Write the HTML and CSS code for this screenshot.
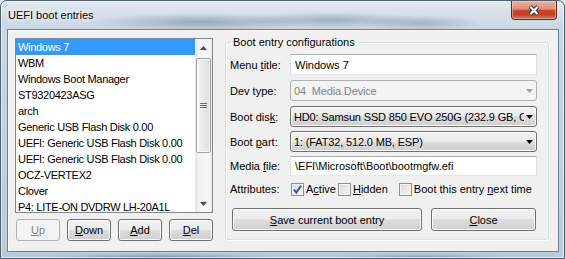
FILE: index.html
```html
<!DOCTYPE html>
<html lang="en">

<head>
     <meta charset="UTF-8">
     <meta name="viewport" content="width=device-width, initial-scale=1.0">
     <title>UEFI boot entries</title>
     <link rel="stylesheet" href="styles.css">
</head>

<body>
     <div class="window">
          <div class="titlebar">
               <span class="title">UEFI boot entries</span>
               <div class="closebtn">
                    <svg width="14" height="11" viewBox="0 0 14 11">
                         <path d="M3 1.5 L11 9.5 M11 1.5 L3 9.5" stroke="#30363c" stroke-width="4.2" fill="none"/>
                         <path d="M3.3 1.8 L10.7 9.2 M10.7 1.8 L3.3 9.2" stroke="#fff" stroke-width="2.2" fill="none"/>
                    </svg>
               </div>
          </div>
          <div class="client">
               <div class="leftside">
                    <div class="listbox">
                         <ul class="entries">
                              <li class="selected">Windows 7</li>
                              <li>WBM</li>
                              <li>Windows Boot Manager</li>
                              <li>ST9320423ASG</li>
                              <li>arch</li>
                              <li>Generic USB Flash Disk 0.00</li>
                              <li>UEFI: Generic USB Flash Disk 0.00</li>
                              <li>UEFI: Generic USB Flash Disk 0.00</li>
                              <li>OCZ-VERTEX2</li>
                              <li>Clover</li>
                              <li>P4: LITE-ON DVDRW LH-20A1L</li>
                         </ul>
                         <div class="scrollbar">
                              <div class="sb-arrow">
                                   <svg width="7" height="4" viewBox="0 0 7 4"><polygon points="0,4 7,4 3.5,0" fill="#4a4a4a"/></svg>
                              </div>
                              <div class="sb-track">
                                   <div class="sb-thumb"><span class="grip"></span></div>
                              </div>
                              <div class="sb-arrow">
                                   <svg width="7" height="4" viewBox="0 0 7 4"><polygon points="0,0 7,0 3.5,4" fill="#4a4a4a"/></svg>
                              </div>
                         </div>
                    </div>
                    <div class="listbuttons">
                         <button class="btn small" disabled><u>U</u>p</button>
                         <button class="btn small"><u>D</u>own</button>
                         <button class="btn small"><u>A</u>dd</button>
                         <button class="btn small"><u>D</u>el</button>
                    </div>
               </div>

               <fieldset class="config">
                    <legend>Boot entry configurations</legend>
                    <div class="row">
                         <label>Menu <u>t</u>itle:</label>
                         <input class="edit" type="text" value="Windows 7">
                    </div>
                    <div class="row gap5">
                         <label>Dev type:</label>
                         <div class="combo disabled">
                              <span class="combo-text">04&nbsp; Media Device</span>
                              <span class="combo-arrow"><svg width="7" height="4" viewBox="0 0 7 4"><polygon points="0,0 7,0 3.5,4" fill="#a3a3a3"/></svg></span>
                         </div>
                    </div>
                    <div class="row gap5">
                         <label>Boot dis<u>k</u>:</label>
                         <div class="combo">
                              <span class="combo-text">HD0: Samsun SSD 850 EVO 250G (232.9 GB, C</span>
                              <span class="combo-arrow"><svg width="7" height="4" viewBox="0 0 7 4"><polygon points="0,0 7,0 3.5,4" fill="#000"/></svg></span>
                         </div>
                    </div>
                    <div class="row gap4">
                         <label>Boot <u>p</u>art:</label>
                         <div class="combo">
                              <span class="combo-text">1: (FAT32, 512.0 MB, ESP)</span>
                              <span class="combo-arrow"><svg width="7" height="4" viewBox="0 0 7 4"><polygon points="0,0 7,0 3.5,4" fill="#000"/></svg></span>
                         </div>
                    </div>
                    <div class="row gap4 short">
                         <label>Media <u>f</u>ile:</label>
                         <input class="edit" type="text" value="\EFI\Microsoft\Boot\bootmgfw.efi">
                    </div>
                    <div class="row attrs">
                         <label>Attributes:</label>
                         <span class="check first">
                              <span class="box">
                                   <svg width="11" height="11" viewBox="0 0 11 11"><path d="M2 5.5 L4.3 8.5 L9 1.8" stroke="#3a5796" stroke-width="2" fill="none"/></svg>
                              </span>
                              <span>A<u>c</u>tive</span>
                         </span>
                         <span class="check">
                              <span class="box"></span>
                              <span><u>H</u>idden</span>
                         </span>
                         <span class="check wide">
                              <span class="box"></span>
                              <span>Boot this entry <u>n</u>ext time</span>
                         </span>
                    </div>
                    <div class="actions">
                         <button class="btn save"><u>S</u>ave current boot entry</button>
                         <button class="btn closeentry"><u>C</u>lose</button>
                    </div>
               </fieldset>
          </div>
     </div>
</body>

</html>
```

FILE: styles.css
```css
html {
     background: #dfe6ed;
}

body {
     margin: 0;
     font-family: "Liberation Sans", Arial, sans-serif;
     font-size: 11px;
     color: #000;
}

.window {
     width: 565px;
     height: 259px;
     box-sizing: border-box;
     border: 1px solid #4e6074;
     border-radius: 7px 7px 0 0;
     padding: 0 5px 6px 6px;
     display: flex;
     flex-direction: column;
     background:
          radial-gradient(ellipse 110px 9px at 200px 21px, rgba(90, 108, 128, 0.45), transparent),
          radial-gradient(ellipse 90px 8px at 330px 19px, rgba(90, 108, 128, 0.4), transparent),
          radial-gradient(ellipse 60px 8px at 420px 22px, rgba(90, 108, 128, 0.35), transparent),
          radial-gradient(ellipse 120px 4px at 160px 256px, rgba(80, 95, 115, 0.45), transparent),
          radial-gradient(ellipse 90px 4px at 420px 256px, rgba(80, 95, 115, 0.35), transparent),
          linear-gradient(#e2e9f0, #c9d6e3 28px, #bccbda);
     box-shadow: inset 0 0 0 1px rgba(255, 255, 255, 0.55);
}

.titlebar {
     height: 28px;
     display: flex;
     align-items: flex-start;
     flex: none;
}

.title {
     margin: 8px 0 0 1px;
     line-height: 13px;
     text-shadow: 0 0 6px #fff, 0 0 3px rgba(255, 255, 255, 0.9);
}

.closebtn {
     margin-left: auto;
     margin-right: 2px;
     width: 46px;
     height: 19px;
     box-sizing: border-box;
     border: 1px solid #5d2a22;
     border-top: none;
     border-radius: 0 0 4px 4px;
     background: linear-gradient(#eab0a2 0%, #df8f7c 45%, #c9472e 52%, #c43f27 75%, #d97a63 100%);
     box-shadow: inset 0 0 0 1px rgba(255, 220, 210, 0.45);
     display: flex;
     align-items: center;
     justify-content: center;
}

.client {
     flex: 1;
     display: flex;
     box-sizing: border-box;
     border: 1px solid #6e7f91;
     background: #f0f0f0;
     padding: 6px 0 0 7px;
     box-shadow: inset 1px 1px 0 #fbfbfb;
}

/* left list */

.leftside {
     width: 198px;
     margin-top: 2px;
     display: flex;
     flex-direction: column;
}

.listbox {
     height: 175px;
     box-sizing: border-box;
     border: 1px solid #828790;
     background: #fff;
     display: flex;
     overflow: hidden;
}

.entries {
     list-style: none;
     margin: 0;
     padding: 0;
     flex: 1;
}

.entries li {
     height: 16px;
     line-height: 16px;
     padding-left: 2px;
     white-space: nowrap;
     letter-spacing: -0.3px;
}

.entries li.selected {
     background: #3399ff;
     color: #fff;
}

.scrollbar {
     width: 17px;
     flex: none;
     display: flex;
     flex-direction: column;
     background: linear-gradient(to right, #e4e4e4, #f4f4f4 25%, #f6f6f6 75%, #ebebeb);
}

.sb-arrow {
     height: 17px;
     display: flex;
     align-items: center;
     justify-content: center;
}

.sb-track {
     flex: 1;
     padding-top: 2px;
}

.sb-thumb {
     height: 95px;
     margin: 0 1px;
     box-sizing: border-box;
     border: 1px solid #a2a2a2;
     border-radius: 2px;
     background: linear-gradient(to right, #f4f4f4, #e8e8e8 50%, #dcdcdc);
     box-shadow: inset 0 0 0 1px rgba(255, 255, 255, 0.75);
     display: flex;
     align-items: center;
     justify-content: center;
}

.grip {
     width: 7px;
     height: 5px;
     background: repeating-linear-gradient(#6a6a6a 0 1px, transparent 1px 2px);
}

.listbuttons {
     display: flex;
     justify-content: space-between;
     margin-top: 6px;
     padding-left: 1px;
}

/* buttons */

.btn {
     font-family: "Liberation Sans", Arial, sans-serif;
     font-size: 11px;
     color: #000;
     padding: 0;
     box-sizing: border-box;
     border: 1px solid #707070;
     border-radius: 3px;
     background: linear-gradient(#f2f2f2 0%, #ebebeb 50%, #dddddd 50%, #cfcfcf 100%);
     box-shadow: inset 0 0 0 1px #fcfcfc;
}

.btn.small {
     width: 44px;
     height: 22px;
}

.btn:disabled {
     border-color: #adb2b5;
     background: #f4f4f4;
     color: #838383;
     box-shadow: none;
}

/* right group */

.config {
     margin: 0 0 0 12px;
     width: 324px;
     height: 204px;
     box-sizing: border-box;
     min-width: 0;
     border: 1px solid #d5dfe5;
     border-radius: 3px;
     padding: 5px 0 8px 4px;
     box-shadow: 1px 1px 0 #fff, inset 1px 1px 0 #fff;
}

.config legend {
     margin-left: 1px;
     padding: 0 2px;
     line-height: 13px;
}

.row {
     display: flex;
     align-items: center;
     height: 21px;
}

.row label {
     width: 60px;
     flex: none;
}

.gap5 {
     margin-top: 5px;
}

.gap4 {
     margin-top: 4px;
}

.row.short {
     height: 20px;
}

.edit {
     width: 247px;
     height: 100%;
     box-sizing: border-box;
     margin: 0;
     border: 1px solid;
     border-color: #abadb3 #dbdfe6 #e3e9ef #e2e3ea;
     background: #fff;
     padding: 0 0 0 4px;
     font-family: "Liberation Sans", Arial, sans-serif;
     font-size: 11px;
     color: #000;
     outline: none;
}

.combo {
     width: 247px;
     height: 21px;
     box-sizing: border-box;
     border: 1px solid #707070;
     border-radius: 3px;
     background: linear-gradient(#f2f2f2 0%, #ebebeb 50%, #dddddd 50%, #cfcfcf 100%);
     box-shadow: inset 0 0 0 1px #fcfcfc;
     display: flex;
     align-items: center;
}

.combo.disabled {
     border-color: #adb2b5;
     background: #f4f4f4;
     box-shadow: none;
     color: #838383;
}

.combo-text {
     flex: 1;
     padding-left: 3px;
     white-space: nowrap;
     overflow: hidden;
     letter-spacing: -0.15px;
}

.combo-arrow {
     width: 11px;
     flex: none;
     display: flex;
     justify-content: center;
     padding-right: 1px;
}

.attrs {
     height: 16px;
     margin-top: 5px;
}

.check {
     display: flex;
     align-items: center;
     margin-left: 2px;
}

.check.first {
     margin-left: 1px;
}

.check.wide {
     margin-left: 11px;
}

.box {
     width: 13px;
     height: 13px;
     box-sizing: border-box;
     border: 1px solid #8e8f8f;
     background: linear-gradient(135deg, #d8d8d8, #f8f8f8);
     box-shadow: inset 0 0 0 1px #f4f4f4;
     margin-right: 2px;
     display: flex;
     align-items: center;
     justify-content: center;
}

.actions {
     display: flex;
     gap: 9px;
     margin-top: 11px;
     padding-left: 2px;
}

.btn.save {
     width: 190px;
     height: 23px;
}

.btn.closeentry {
     width: 105px;
     height: 23px;
}
```
